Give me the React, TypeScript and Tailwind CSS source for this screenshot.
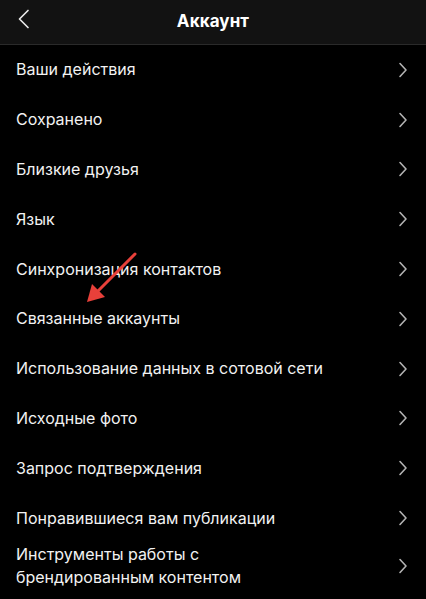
import React from "react";

const items: string[][] = [
  ["Ваши действия"],
  ["Сохранено"],
  ["Близкие друзья"],
  ["Язык"],
  ["Синхронизация контактов"],
  ["Связанные аккаунты"],
  ["Использование данных в сотовой сети"],
  ["Исходные фото"],
  ["Запрос подтверждения"],
  ["Понравившиеся вам публикации"],
  ["Инструменты работы с", "брендированным контентом"],
];

function Chevron() {
  return (
    <svg width="10" height="16" viewBox="0 0 10 16" className="shrink-0">
      <path d="M2 1.5 L8 8 L2 14.5" fill="none" stroke="#b3b3b3" strokeWidth="1.6" strokeLinecap="round" strokeLinejoin="round" />
    </svg>
  );
}

export default function App() {
  return (
    <div className="w-[426px] h-[599px] overflow-hidden bg-black text-[#f2f2f2] relative" style={{ fontFamily: "Inter, 'Noto Sans', sans-serif" }}>
      <div className="h-[45px] bg-[#121212] border-b border-[#2a2a2a] relative flex items-center justify-center">
        <svg width="14" height="22" viewBox="0 0 14 22" className="absolute left-[17px] top-[9px]">
          <path d="M11 1.5 L2.5 10 L11 18.5" fill="none" stroke="#e8e8e8" strokeWidth="1.7" strokeLinecap="round" strokeLinejoin="round" />
        </svg>
        <span className="text-[17px] font-bold text-white tracking-[0.1px]">Аккаунт</span>
      </div>
      <div className="flex flex-col">
        {items.map((lines, i) => (
          <div key={i} className={`flex items-center justify-between pl-4 pr-[18px] ${lines.length > 1 ? "h-[47px]" : "h-[49.8px]"}`}>
            <div className="flex flex-col text-[16px] leading-[23px]">
              {lines.map((l) => (
                <span key={l}>{l}</span>
              ))}
            </div>
            <Chevron />
          </div>
        ))}
      </div>
      <svg width="426" height="599" className="absolute left-0 top-0 pointer-events-none">
        <line x1="135" y1="254" x2="97" y2="292" stroke="#e8403a" strokeWidth="3" strokeLinecap="round" />
        <polygon points="87,302 92,284 105,297" fill="#e8403a" />
      </svg>
    </div>
  );
}
